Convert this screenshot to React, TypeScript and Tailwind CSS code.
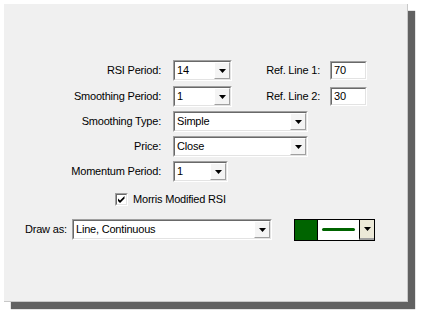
import React from 'react';

const Arrow = () => (
  <svg width="7" height="4" viewBox="0 0 7 4">
    <path d="M0 0h7L3.5 4z" fill="#000" />
  </svg>
);

const Combo = ({ className, value }: { className: string; value: string }) => (
  <div className={`${className} h-[21px] flex border border-t-[#a0a0a0] border-l-[#a0a0a0] border-r-white border-b-white`}>
    <div className="flex-1 flex border border-t-[#696969] border-l-[#696969] border-r-[#e3e3e3] border-b-[#e3e3e3] bg-white">
      <span className="flex-1 pl-[2px] leading-[17px]">{value}</span>
      <div className="w-[16px] flex items-center justify-center bg-[#f4f4f4] border border-t-white border-l-white border-r-[#a0a0a0] border-b-[#a0a0a0]">
        <Arrow />
      </div>
    </div>
  </div>
);

const TextBox = ({ value }: { value: string }) => (
  <div className="w-[37px] h-[19px] flex border border-t-[#a0a0a0] border-l-[#a0a0a0] border-r-white border-b-white">
    <div className="flex-1 border border-t-[#696969] border-l-[#696969] border-r-[#e3e3e3] border-b-[#e3e3e3] bg-white pl-[2px] leading-[15px]">
      {value}
    </div>
  </div>
);

const Label = ({ text }: { text: string }) => (
  <div className="w-[157px] text-right shrink-0">{text}</div>
);

export default function App() {
  return (
    <div className="w-[426px] h-[319px] bg-white pl-[4px] pt-[4px] font-['Liberation_Sans',sans-serif] text-[11px] tracking-[-0.2px] text-black">
      <div className="w-[404px] h-[298px] bg-[#f0f0f0] border-r border-b border-[#c8c8c8] shadow-[7px_7px_1px_rgba(0,0,0,0.62)] flex flex-col pt-[56px]">
        {/* RSI Period / Ref Line 1 */}
        <div className="flex items-center h-[21px]">
          <Label text="RSI Period:" />
          <Combo className="ml-[12px] w-[59px]" value="14" />
          <div className="w-[88px] text-right">Ref. Line 1:</div>
          <div className="ml-[10px]">
            <TextBox value="70" />
          </div>
        </div>

        <div className="flex items-center h-[21px] mt-[5px]">
          <Label text="Smoothing Period:" />
          <Combo className="ml-[12px] w-[59px]" value="1" />
          <div className="w-[88px] text-right">Ref. Line 2:</div>
          <div className="ml-[10px]">
            <TextBox value="30" />
          </div>
        </div>

        <div className="flex items-center h-[21px] mt-[4px]">
          <Label text="Smoothing Type:" />
          <Combo className="ml-[12px] w-[135px]" value="Simple" />
        </div>

        <div className="flex items-center h-[21px] mt-[4px]">
          <Label text="Price:" />
          <Combo className="ml-[12px] w-[135px]" value="Close" />
        </div>

        <div className="flex items-center h-[21px] mt-[4px]">
          <Label text="Momentum Period:" />
          <Combo className="ml-[12px] w-[55px]" value="1" />
        </div>

        {/* checkbox */}
        <div className="flex items-center h-[13px] mt-[11px] pl-[111px]">
          <div className="w-[13px] h-[13px] flex border border-t-[#a0a0a0] border-l-[#a0a0a0] border-r-white border-b-white">
            <div className="flex-1 flex items-center justify-center bg-white border border-t-[#696969] border-l-[#696969] border-r-[#e3e3e3] border-b-[#e3e3e3]">
              <svg width="7" height="7" viewBox="0 0 7 7">
                <path d="M0 2.5l2 2L6.5 0v2.5L2 7 0 5z" fill="#000" />
              </svg>
            </div>
          </div>
          <span className="ml-[5px]">Morris Modified RSI</span>
        </div>

        {/* Draw as */}
        <div className="flex items-center h-[21px] mt-[13px] pl-[21px]">
          <div className="w-[47px]">Draw as:</div>
          <Combo className="w-[200px]" value="Line, Continuous" />
          <div className="ml-[22px] w-[81px] h-[22px] flex border border-black">
            <div className="w-[22px] bg-[#006400]" />
            <div className="flex-1 flex items-center justify-center bg-white border-l border-black">
              <div className="w-[33px] h-[3px] rounded-full bg-[#006400]" />
            </div>
            <div className="w-[15px] flex items-center justify-center bg-[#ece9d8] border-l border-black border-b-2 border-b-[#a0a0a0]">
              <Arrow />
            </div>
          </div>
        </div>
      </div>
    </div>
  );
}
